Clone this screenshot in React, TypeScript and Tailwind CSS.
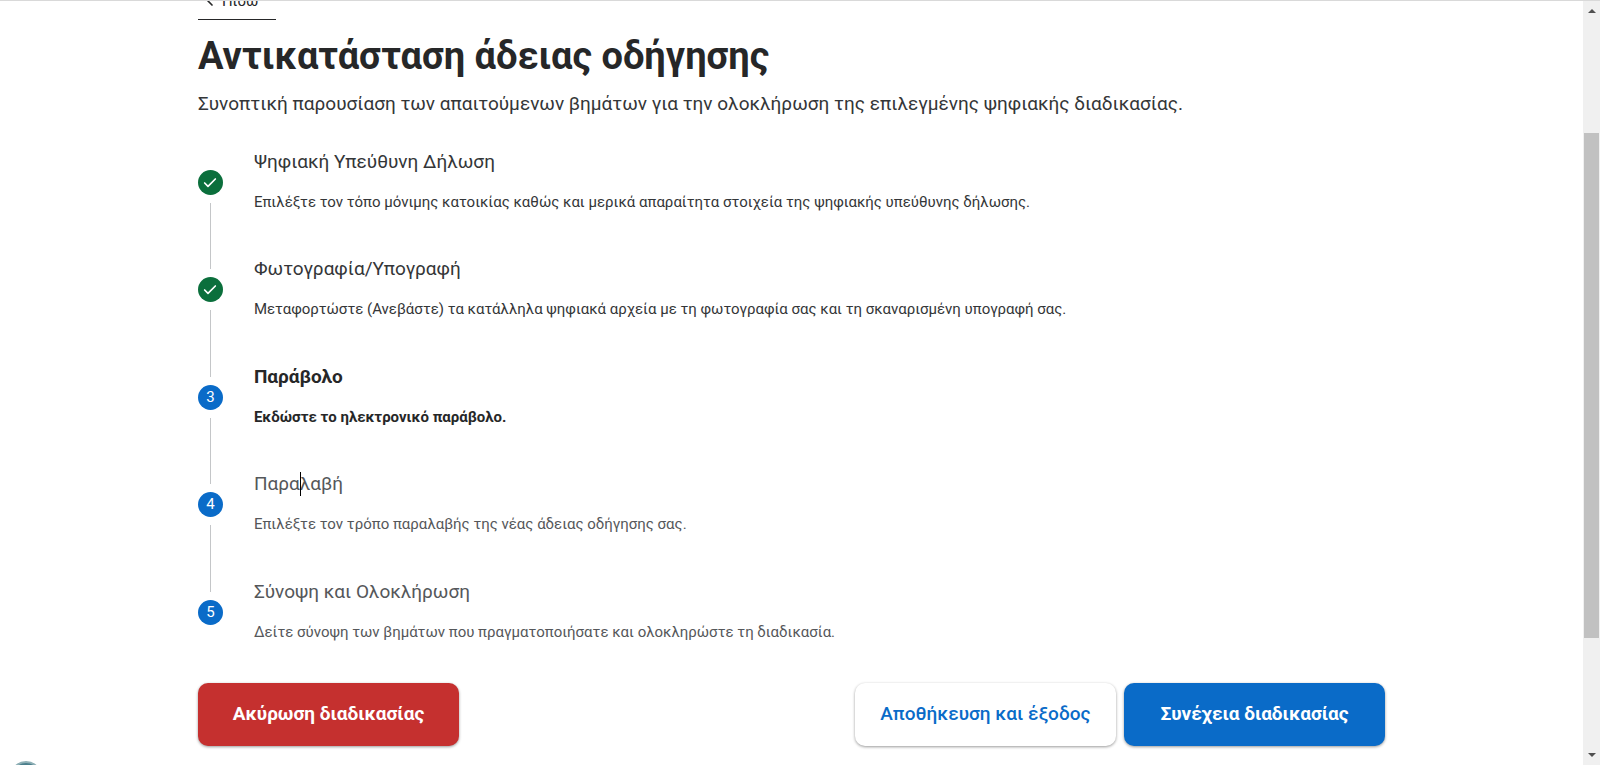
import { Check, ChevronLeft } from 'lucide-react';
import clsx from 'clsx';

type StepStatus = 'done' | 'current' | 'pending';

interface Step {
  title: string;
  description: string;
  status: StepStatus;
}

const steps: Step[] = [
  {
    title: 'Ψηφιακή Υπεύθυνη Δήλωση',
    description: 'Επιλέξτε τον τόπο μόνιμης κατοικίας καθώς και μερικά απαραίτητα στοιχεία της ψηφιακής υπεύθυνης δήλωσης.',
    status: 'done',
  },
  {
    title: 'Φωτογραφία/Υπογραφή',
    description: 'Μεταφορτώστε (Ανεβάστε) τα κατάλληλα ψηφιακά αρχεία με τη φωτογραφία σας και τη σκαναρισμένη υπογραφή σας.',
    status: 'done',
  },
  {
    title: 'Παράβολο',
    description: 'Εκδώστε το ηλεκτρονικό παράβολο.',
    status: 'current',
  },
  {
    title: 'Παραλαβή',
    description: 'Επιλέξτε τον τρόπο παραλαβής της νέας άδειας οδήγησης σας.',
    status: 'pending',
  },
  {
    title: 'Σύνοψη και Ολοκλήρωση',
    description: 'Δείτε σύνοψη των βημάτων που πραγματοποιήσατε και ολοκληρώστε τη διαδικασία.',
    status: 'pending',
  },
];

const textColors: Record<StepStatus, string> = {
  done: 'text-[#343638]',
  current: 'text-[#262728]',
  pending: 'text-[#55575a]',
};

function StepItem({ step, index, isLast }: { step: Step; index: number; isLast: boolean }) {
  return (
    <li className="flex gap-[31px]">
      <div className="flex w-[25px] shrink-0 flex-col items-center pt-5">
        <span
          className={clsx(
            'flex h-[25px] w-[25px] shrink-0 items-center justify-center rounded-full text-[15px] text-white',
            step.status === 'done' ? 'bg-[#0b6f3c]' : 'bg-[#0a6bc8]'
          )}
        >
          {step.status === 'done' ? <Check className="h-4 w-4" strokeWidth={2.5} /> : index + 1}
        </span>
        {!isLast && <span className="mt-2 -mb-3 w-px flex-1 bg-[#c4c6c8]" />}
      </div>
      <div className={textColors[step.status]}>
        <h2 className={clsx('text-[19px] leading-6', step.status === 'current' && 'font-bold')}>
          {/* text cursor left inside the fourth title */}
          {index === 3 ? (
            <>
              Παρα
              <span className="relative">
                <span className="absolute top-0 left-0 h-6 w-px bg-black" />
              </span>
              λαβή
            </>
          ) : (
            step.title
          )}
        </h2>
        <p className={clsx('mt-4 text-[15px] leading-6', step.status === 'current' && 'font-bold')}>
          {step.description}
        </p>
      </div>
    </li>
  );
}

function Scrollbar() {
  return (
    <div className="flex w-[17px] shrink-0 flex-col items-center bg-[#f0f0f0] py-2" aria-hidden="true">
      <svg className="h-1 w-2 shrink-0" viewBox="0 0 8 4" fill="#505050">
        <path d="M4 0 8 4H0z" />
      </svg>
      <div className="grow-[120]" />
      <div className="w-[15px] grow-[506] bg-[#c1c1c1]" />
      <div className="grow-[115]" />
      <svg className="h-1 w-2 shrink-0" viewBox="0 0 8 4" fill="#505050">
        <path d="M0 0h8L4 4z" />
      </svg>
    </div>
  );
}

const buttonClass = 'h-[63px] w-[22%] rounded-[10px] text-[19px] shadow-[0_1px_3px_rgba(0,0,0,0.4)]';

export default function App() {
  return (
    <div className="relative flex h-screen overflow-hidden border-t border-[#d9d9d9] bg-white font-[Roboto,'Liberation_Sans',sans-serif] text-[#262728]">
      <main className="min-w-0 flex-1">
        <div className="mx-auto w-3/4">
          <a
            href="#"
            className="-mt-2.5 flex w-[78px] items-center gap-1 border-b border-[#262728] pb-2 pl-1 text-[15px] leading-5"
          >
            <ChevronLeft className="h-4 w-4" strokeWidth={2.5} />
            Πίσω
          </a>
          <h1 className="mt-3 text-[38px] leading-12 font-bold">Αντικατάσταση άδειας οδήγησης</h1>
          <p className="mt-3 text-[19px] leading-6 text-[#343638]">
            Συνοπτική παρουσίαση των απαιτούμενων βημάτων για την ολοκλήρωση της επιλεγμένης ψηφιακής διαδικασίας.
          </p>

          <ol className="mt-[34px] grid min-h-[537px] grid-rows-5">
            {steps.map((step, index) => (
              <StepItem key={step.title} step={step} index={index} isLast={index === steps.length - 1} />
            ))}
          </ol>

          <div className="-mt-1 flex gap-2">
            <button type="button" className={clsx(buttonClass, 'mr-auto bg-[#c5302f] font-bold text-white')}>
              Ακύρωση διαδικασίας
            </button>
            <button type="button" className={clsx(buttonClass, 'bg-white font-medium text-[#0a6bc8]')}>
              Αποθήκευση και έξοδος
            </button>
            <button type="button" className={clsx(buttonClass, 'bg-[#0a6bc8] font-bold text-white')}>
              Συνέχεια διαδικασίας
            </button>
          </div>
        </div>
      </main>

      <Scrollbar />

      {/* Accessibility widget, mostly below the fold */}
      <button
        type="button"
        aria-label="Προσβασιμότητα"
        className="absolute -bottom-7 left-2.5 h-8 w-8 rounded-full border-2 border-[#8fb0b6] bg-[#4b7f8c]"
      />
    </div>
  );
}
